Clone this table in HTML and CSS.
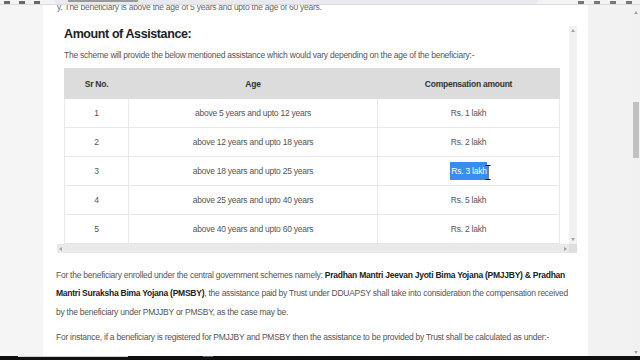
FILE: index.html
```html
<!DOCTYPE html>
<html lang="en">
<head>
    <meta charset="UTF-8">
    <meta name="viewport" content="width=device-width, initial-scale=1.0">
    <title>DDUAPSY - Amount of Assistance</title>
    <link rel="stylesheet" href="styles.css">
</head>
<body>
    <div class="browser-bar">
        <div class="nav-icons"><span></span><span></span><span></span></div>
        <div class="omnibox"><span class="url-mark"></span></div>
        <div class="tool-icons"><span></span><span></span><span></span><span></span></div>
    </div>

    <div class="viewport">
        <div class="gutter"></div>

        <main class="panel">
            <p class="cut-line">y. The beneficiary is above the age of 5 years and upto the age of 60 years.</p>

            <div class="scrollbox">
                <div class="scroll-content">
                    <h2 class="section-title">Amount of Assistance:</h2>
                    <p class="intro">The scheme will provide the below mentioned assistance which would vary depending on the age of the beneficiary:-</p>
                    <table class="assist-table">
                        <thead>
                            <tr>
                                <th class="col-sr">Sr No.</th>
                                <th class="col-age">Age</th>
                                <th class="col-amt">Compensation amount</th>
                            </tr>
                        </thead>
                        <tbody>
                            <tr><td>1</td><td>above 5 years and upto 12 years</td><td>Rs. 1 lakh</td></tr>
                            <tr><td>2</td><td>above 12 years and upto 18 years</td><td>Rs. 2 lakh</td></tr>
                            <tr>
                                <td>3</td>
                                <td>above 18 years and upto 25 years</td>
                                <td><span class="selected">Rs. 3 lakh<svg class="ibeam" width="6" height="15" viewBox="0 0 6 15"><path d="M0.5 0.5h2l0.5 0.6l0.5-0.6h2M3 1v13M0.5 14.5h2l0.5-0.6l0.5 0.6h2" fill="none" stroke="#111" stroke-width="1.1"/></svg></span></td>
                            </tr>
                            <tr><td>4</td><td>above 25 years and upto 40 years</td><td>Rs. 5 lakh</td></tr>
                            <tr><td>5</td><td>above 40 years and upto 60 years</td><td>Rs. 2 lakh</td></tr>
                        </tbody>
                    </table>
                </div>
                <div class="vbar"><span class="arrow up"></span><span class="arrow down"></span></div>
                <div class="hbar"><span class="arrow left"></span><span class="arrow right"></span></div>
                <div class="corner"></div>
            </div>

            <p class="body-text">For the beneficiary enrolled under the central government schemes namely: <b>Pradhan Mantri Jeevan Jyoti Bima Yojana (PMJJBY) &amp; Pradhan Mantri Suraksha Bima Yojana (PMSBY)</b>, the assistance paid by Trust under DDUAPSY shall take into consideration the compensation received by the beneficiary under PMJJBY or PMSBY, as the case may be.</p>
            <p class="body-text">For instance, if a beneficiary is registered for PMJJBY and PMSBY then the assistance to be provided by Trust shall be calculated as under:-</p>
        </main>

        <div class="gutter gutter-right"></div>

        <div class="page-scroll">
            <span class="arrow up"></span>
            <div class="thumb"></div>
            <span class="arrow down"></span>
        </div>
    </div>

    <div class="taskbar"><span class="task-line"></span><span class="task-mark"></span></div>
</body>
</html>
```

FILE: styles.css
```css
html, body {
    margin: 0;
    height: 360px;
    overflow: hidden;
}
body {
    font-family: "Liberation Sans", Arial, sans-serif;
    display: flex;
    flex-direction: column;
    background-color: #f4f4f4;
    color: #555;
}

/* browser chrome, mostly cut off at the top */
.browser-bar {
    height: 4px;
    display: flex;
    align-items: flex-end;
    background-color: #f1f3f4;
    border-bottom: 1px solid #dadce0;
    overflow: hidden;
}
.nav-icons {
    display: flex;
    gap: 9px;
    padding-left: 4px;
    width: 44px;
}
.nav-icons span {
    width: 6px;
    height: 3px;
    background-color: #6a6a6a;
}
.omnibox {
    flex: 1;
    height: 4px;
    margin-left: 6px;
    margin-right: 40px;
    background-color: #e8eaed;
    border-radius: 0 0 8px 8px;
    display: flex;
    align-items: flex-start;
    padding-left: 14px;
}
.url-mark {
    width: 70px;
    height: 2px;
    background-color: #9a9a9a;
}
.tool-icons {
    display: flex;
    gap: 10px;
    padding-right: 8px;
}
.tool-icons span {
    width: 6px;
    height: 3px;
    background-color: #777;
}

.viewport {
    flex: 1;
    display: grid;
    grid-template-columns: 43px 545px 44px 8px;
    min-height: 0;
}
.gutter {
    background-color: #f5f5f5;
}
.gutter-right {
    background-color: #f2f2f2;
}

.panel {
    background-color: #fff;
    padding: 0 20px 0 13px;
    overflow: hidden;
    font-size: 8.5px;
    letter-spacing: -0.25px;
}
.cut-line {
    margin: -3px 0 0 1px;
    line-height: 10px;
    color: #666;
}

/* scrollable table region */
.scrollbox {
    margin: 14px 0 0 1px;
    width: 520px;
    display: grid;
    grid-template-columns: 512px 8px;
    grid-template-rows: 218px 9px;
}
.scroll-content {
    padding: 0 7px;
    overflow: hidden;
}
.section-title {
    margin: 0;
    padding-top: 1px;
    font-size: 12.5px;
    line-height: 15px;
    letter-spacing: -0.4px;
    color: #222;
}
.intro {
    margin: 8px 0 0;
    line-height: 10px;
}
.assist-table {
    margin-top: 8px;
    width: 496px;
    border-collapse: collapse;
    text-align: center;
}
.assist-table th {
    height: 29px;
    padding: 0;
    background-color: #dcdcdc;
    border: 1px solid #dcdcdc;
    color: #333;
    font-weight: bold;
}
.assist-table td {
    height: 28px;
    padding: 0;
    border: 1px solid #e8e8e8;
    color: #555;
}
.col-sr {
    width: 63px;
}
.col-age {
    width: 248px;
}
.selected {
    position: relative;
    display: inline-block;
    line-height: 18px;
    padding-left: 1px;
    background-color: #3a8cf0;
    color: #fff;
}
.ibeam {
    position: absolute;
    right: -4px;
    top: 3px;
}

.vbar {
    background-color: #f1f1f1;
    display: flex;
    flex-direction: column;
    justify-content: space-between;
    align-items: center;
    padding: 3px 0;
}
.hbar {
    background-color: #e9e9e9;
    display: flex;
    justify-content: space-between;
    align-items: center;
    padding: 0 2px;
}
.corner {
    background-color: #dedede;
}
.arrow {
    width: 0;
    height: 0;
    border: 2px solid transparent;
}
.arrow.up {
    border-bottom: 3px solid #a3a3a3;
    border-top-width: 0;
}
.arrow.down {
    border-top: 3px solid #a3a3a3;
    border-bottom-width: 0;
}
.arrow.left {
    border-right: 3px solid #a3a3a3;
    border-left-width: 0;
}
.arrow.right {
    border-left: 3px solid #a3a3a3;
    border-right-width: 0;
}

.body-text {
    margin: 12.5px 0 0;
    line-height: 18.6px;
}
.body-text + .body-text {
    margin-top: 6.5px;
}
.body-text b {
    color: #222;
}

/* page scrollbar */
.page-scroll {
    background-color: #f1f1f1;
    display: flex;
    flex-direction: column;
    align-items: center;
    padding-top: 6px;
}
.page-scroll .thumb {
    width: 6px;
    height: 56px;
    margin-top: 88px;
    background-color: #c1c1c1;
}
.page-scroll .arrow.down {
    margin-top: auto;
    margin-bottom: 2px;
}

.taskbar {
    height: 4px;
    background-color: #101010;
    display: flex;
    align-items: flex-start;
}
.task-line {
    width: 110px;
    height: 1px;
    margin-left: 18px;
    background-color: #cfcfcf;
}
.task-mark {
    width: 10px;
    height: 1px;
    margin-left: 75px;
    background-color: #666;
}
```
